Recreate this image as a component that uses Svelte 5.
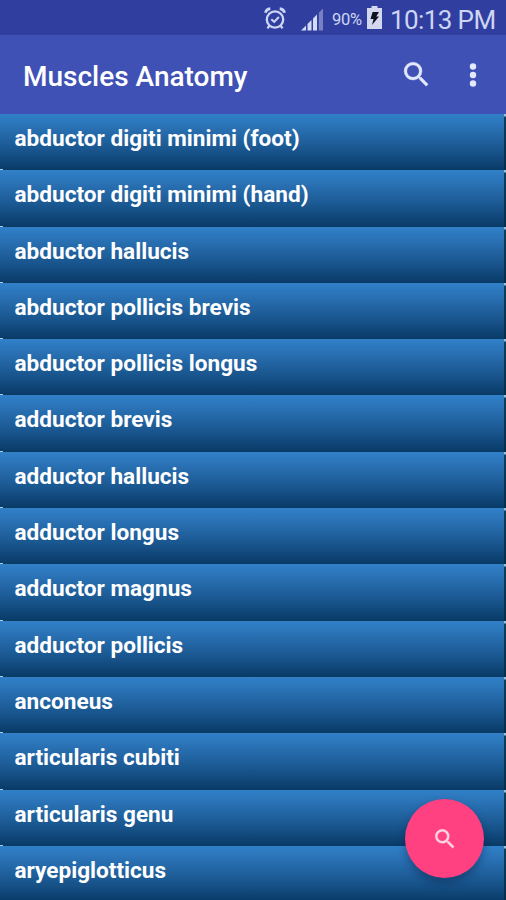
<script>
  const muscles = [
    'abductor digiti minimi (foot)',
    'abductor digiti minimi (hand)',
    'abductor hallucis',
    'abductor pollicis brevis',
    'abductor pollicis longus',
    'adductor brevis',
    'adductor hallucis',
    'adductor longus',
    'adductor magnus',
    'adductor pollicis',
    'anconeus',
    'articularis cubiti',
    'articularis genu',
    'aryepiglotticus'
  ];
</script>

{#snippet magnifier(size)}
  <svg width={size} height={size} viewBox="0 0 24 24" fill="currentColor" stroke="currentColor" stroke-width="0.3" aria-hidden="true">
    <path d="M15.5 14h-.79l-.28-.27A6.47 6.47 0 0 0 16 9.5 6.5 6.5 0 1 0 9.5 16c1.61 0 3.09-.59 4.23-1.57l.27.28v.79l5 4.99L20.49 19l-4.99-5zm-6 0C7.01 14 5 11.99 5 9.5S7.01 5 9.5 5 14 7.01 14 9.5 11.99 14 9.5 14z" />
  </svg>
{/snippet}

<div class="screen">
  <div class="status">
    <svg class="alarm" width="22" height="23" viewBox="0 0 22 23" fill="none" stroke="currentColor" aria-hidden="true">
      <circle cx="11" cy="12.5" r="8.2" stroke-width="2.3" />
      <path d="M7.3 12.3l2.9 2.6 4.7-4.800" stroke-width="2.1" />
      <path d="M1.4 5.800c.5-2.300 2.300-3.900 4.900-4.200M20.600 5.800c-.5-2.300-2.300-3.900-4.900-4.200" stroke-width="2.700" />
      <path d="M5.500 18.500l-2 2.800M16.500 18.500l2 2.800" stroke-width="2.300" />
    </svg>
    <svg class="signal" width="23" height="23" viewBox="0 0 23 23" aria-hidden="true">
      <path d="M0 22.500L5 17.500V22.500z M6.500 16L10.500 12V22.500H6.500z M12 10.500L16 6.500V22.500H12z" fill="#d3dbf6" />
      <path d="M17.800 4.700L22 .5V22.500H17.800z" fill="#7780c0" />
    </svg>
    <span class="percent">90%</span>
    <svg class="battery" width="15" height="23" viewBox="0 0 15 23" aria-hidden="true">
      <path d="M4.500 0h6v2H15v21H0V2h4.500z" fill="#d3d8ee" />
      <path d="M5.600 6H12L9.200 10.400H12L5 19l1.500-6H3.500z" fill="#10121e" />
    </svg>
    <span class="clock">10:13 PM</span>
  </div>
  <header>
    <h1>Muscles Anatomy</h1>
    <button class="search" aria-label="Search">{@render magnifier(33)}</button>
    <button class="more" aria-label="More options">
      <svg width="8" height="24" viewBox="0 0 8 24" fill="currentColor" aria-hidden="true">
        <circle cx="4" cy="3.500" r="3.200" />
        <circle cx="4" cy="12" r="3.200" />
        <circle cx="4" cy="20.500" r="3.200" />
      </svg>
    </button>
  </header>
  <ul>
    {#each muscles as name}
      <li><span>{name}</span></li>
    {/each}
  </ul>
  <button class="fab" aria-label="Find muscle">{@render magnifier(26)}</button>
</div>

<style>
  :global(body) {
    margin: 0;
    overflow: hidden;
  }
  .screen {
    position: relative;
    width: 506px;
    height: 900px;
    overflow: hidden;
    background: #0b3d6c;
    font-family: Roboto, sans-serif;
  }
  button {
    border: 0;
    padding: 0;
    background: none;
    color: inherit;
    display: flex;
  }
  svg {
    display: block;
    flex: none;
  }
  .status {
    box-sizing: border-box;
    height: 35px;
    padding: 0 11px 0 0;
    display: flex;
    justify-content: flex-end;
    align-items: center;
    background: #303f9f;
    color: #cdd5f4;
    white-space: nowrap;
  }
  .alarm {
    margin: 1px 15px 0 0;
  }
  .signal {
    margin: 3px 8px 0 0;
  }
  .percent {
    width: 30px;
    margin: 3px 5px 0 0;
    font-size: 16.5px;
    letter-spacing: -0.3px;
  }
  .battery {
    margin-right: 8px;
  }
  .clock {
    width: 105px;
    margin-top: 4px;
    font-size: 26px;
    letter-spacing: -0.6px;
  }
  header {
    box-sizing: border-box;
    height: 79px;
    padding: 0 29px 0 23px;
    display: flex;
    align-items: center;
    background: #3f51b5;
    color: #e3e8fc;
  }
  h1 {
    flex: 1;
    margin: 4px 0 0;
    font-size: 28px;
    font-weight: 500;
    color: #fff;
    white-space: nowrap;
  }
  .search {
    margin-right: 36px;
  }
  .more {
    margin-top: 1px;
  }
  ul {
    margin: 0;
    padding: 0;
    list-style: none;
  }
  li {
    position: relative;
    box-sizing: border-box;
    height: 56.3px;
    padding: 11px 0 0 14.500px;
    background: linear-gradient(#3080c8 0%, #2b74b8 20%, #1a5790 62%, #0a3d6b 96%, #093a63 100%);
    font-size: 22.600px;
    line-height: 28px;
    font-weight: 700;
    color: #fff;
    white-space: nowrap;
  }
  li::before {
    content: '';
    position: absolute;
    left: 0;
    bottom: 0;
    width: 3px;
    height: 1px;
    background: #a9cde6;
  }
  li::after {
    content: '';
    position: absolute;
    right: 0;
    top: 0;
    bottom: 0;
    width: 2px;
    background: linear-gradient(#9dbdd0 0 2px, #103d58 3px, #052e49);
  }
  .fab {
    position: absolute;
    left: 405px;
    top: 799px;
    width: 79px;
    height: 79px;
    border-radius: 50%;
    align-items: center;
    justify-content: center;
    background: #ff4081;
    color: #ffd3e2;
    box-shadow: 0 5px 8px rgba(0, 20, 50, 0.35);
  }
</style>
